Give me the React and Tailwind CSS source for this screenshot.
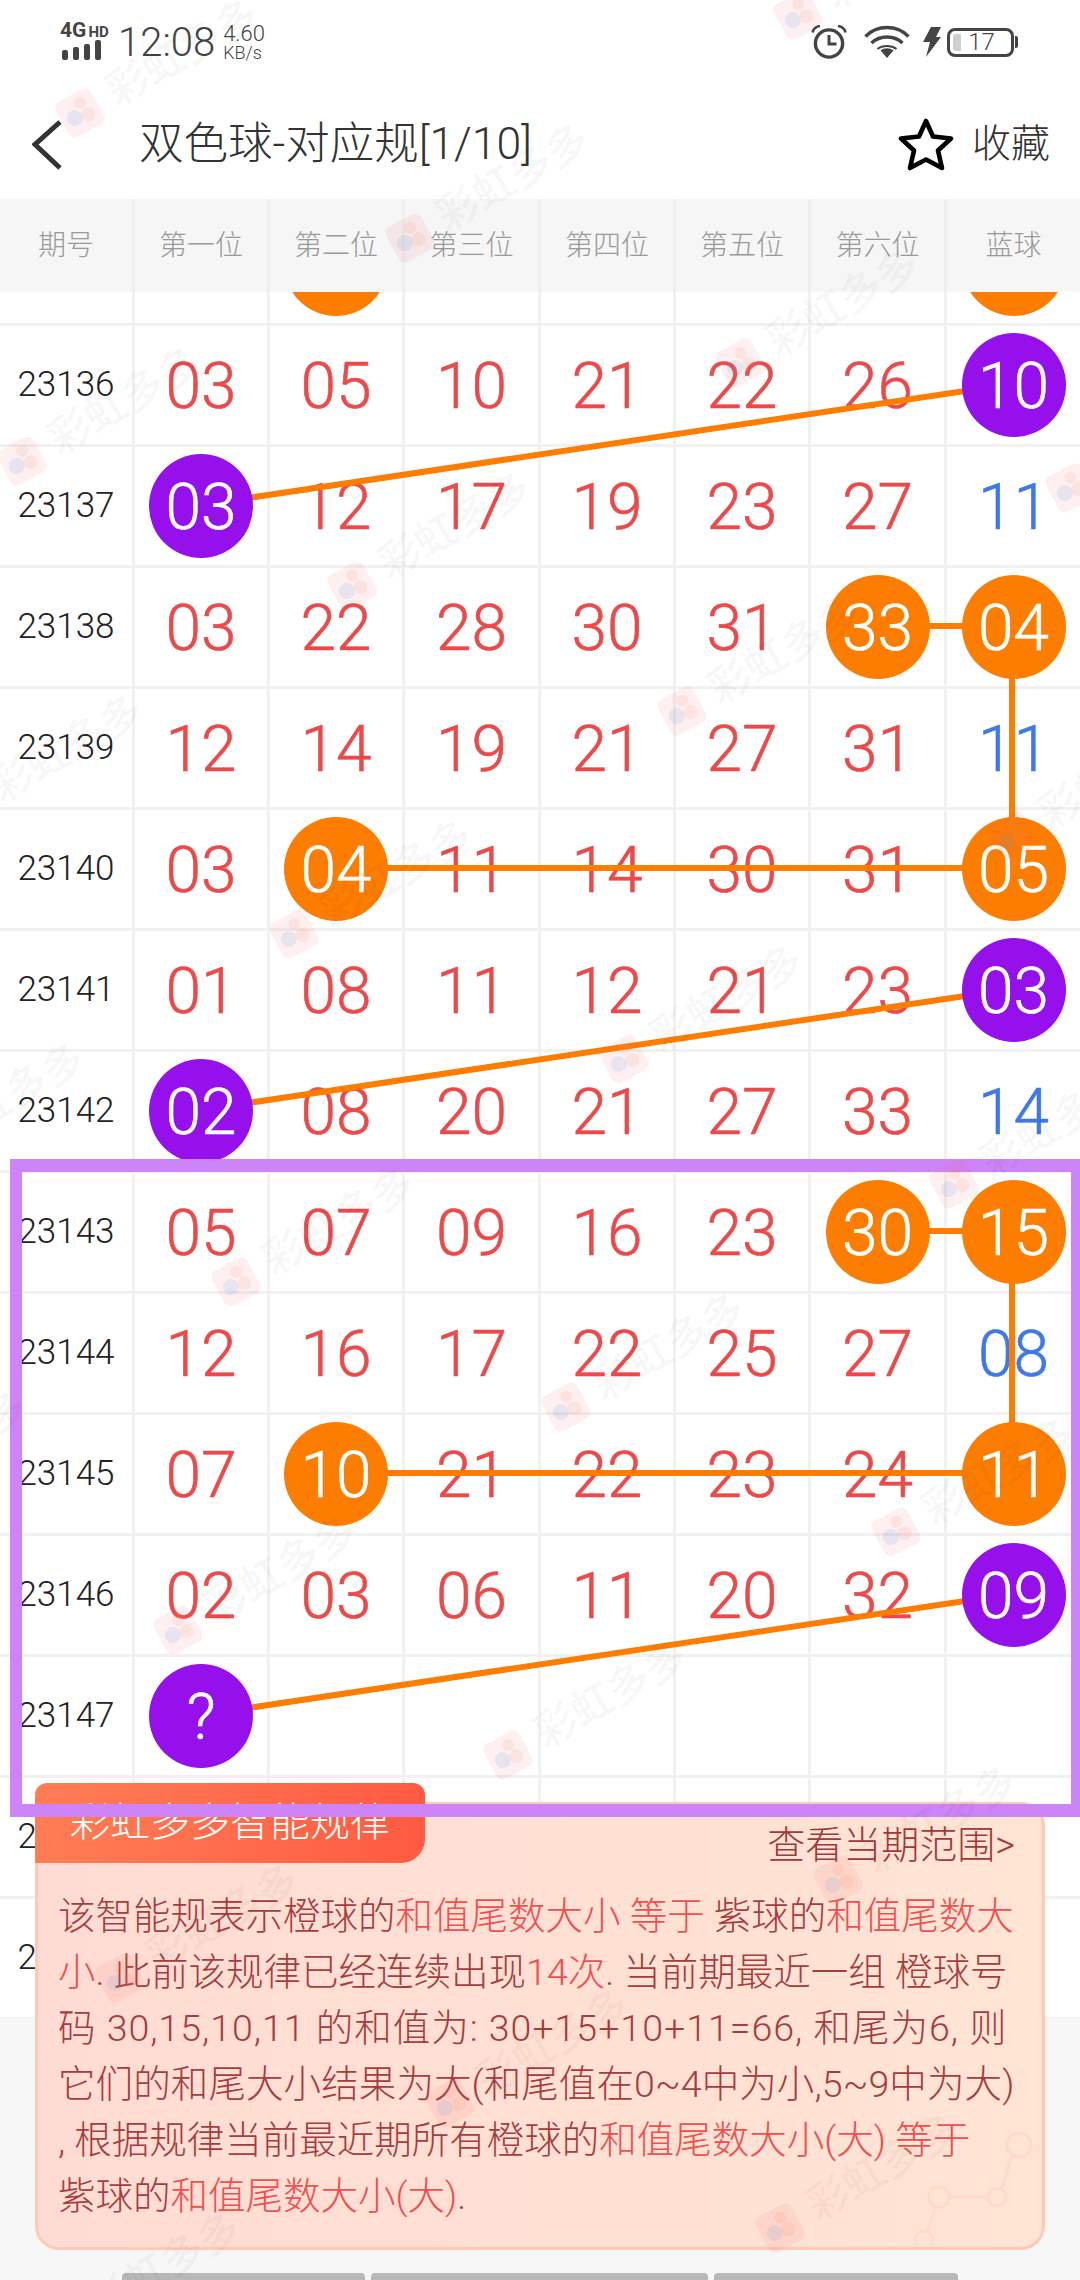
import React from 'react';

const orange = 'bg-[#fd7d00]';
const purple = 'bg-[#9510eb]';

// o = orange ball, p = purple ball, value in first six slots is red, last is blue
const rows = [
  { id: '', nums: ['', 'o:', '', '', '', '', 'o:'] },
  { id: '23136', nums: ['03', '05', '10', '21', '22', '26', 'p:10'] },
  { id: '23137', nums: ['p:03', '12', '17', '19', '23', '27', '11'] },
  { id: '23138', nums: ['03', '22', '28', '30', '31', 'o:33', 'o:04'] },
  { id: '23139', nums: ['12', '14', '19', '21', '27', '31', '11'] },
  { id: '23140', nums: ['03', 'o:04', '11', '14', '30', '31', 'o:05'] },
  { id: '23141', nums: ['01', '08', '11', '12', '21', '23', 'p:03'] },
  { id: '23142', nums: ['p:02', '08', '20', '21', '27', '33', '14'] },
  { id: '23143', nums: ['05', '07', '09', '16', '23', 'o:30', 'o:15'] },
  { id: '23144', nums: ['12', '16', '17', '22', '25', '27', '08'] },
  { id: '23145', nums: ['07', 'o:10', '21', '22', '23', '24', 'o:11'] },
  { id: '23146', nums: ['02', '03', '06', '11', '20', '32', 'p:09'] },
  { id: '23147', nums: ['p:?', '', '', '', '', '', ''] },
  { id: '23148', nums: ['', '', '', '', '', '', ''] },
  { id: '23149', nums: ['', '', '', '', '', '', ''] },
];

const headers = ['期号', '第一位', '第二位', '第三位', '第四位', '第五位', '第六位', '蓝球'];
const gridCols = 'grid grid-cols-[135px_135px_135px_136px_135px_135px_136px_133px]';

const links = [
  [1012, 384, 201, 505],
  [876, 626, 1012, 626],
  [1012, 626, 1012, 868],
  [336, 868, 1012, 868],
  [1012, 989, 201, 1110],
  [876, 1231, 1012, 1231],
  [1012, 1231, 1012, 1473],
  [336, 1473, 1012, 1473],
  [1012, 1594, 201, 1715],
];

const marks = [];
for (let j = -2; j < 8; j++) {
  for (let i = -2; i < 5; i++) {
    const x = 80 + 330 * i - 58 * j;
    const y = 113 + 125 * i + 348 * j;
    if (x > -220 && x < 1120 && y > -60 && y < 2420) marks.push({ x, y });
  }
}

const Cell = ({ value, blue, last }) => {
  const ball = value.startsWith('o:') || value.startsWith('p:');
  const text = ball ? value.slice(2) : value;
  return (
    <div className={`flex items-center justify-center ${last ? '' : 'border-r-[3px] border-[#f1f1f1]'}`}>
      {ball ? (
        <div className={`relative z-[2] flex h-[104px] w-[104px] shrink-0 items-center justify-center rounded-full pt-[3px] text-[64px] font-light text-white [-webkit-text-stroke:0.6px] ${value[0] === 'o' ? orange : purple}`}>
          {text}
        </div>
      ) : (
        <span className={`pt-[3px] text-[64px] font-light [-webkit-text-stroke:0.6px] ${blue ? 'text-[#3f78e8]' : 'text-[#ec4a4a]'}`}>{text}</span>
      )}
    </div>
  );
};

const Red = ({ children }) => <span className="text-[#f04f4f]">{children}</span>;

const Alarm = () => (
  <svg width="36" height="34" viewBox="0 0 36 34" fill="none" stroke="#444" strokeWidth="3.4">
    <circle cx="18" cy="18.5" r="13.6" />
    <path d="M18 10v9h7.5" strokeWidth="3" />
    <path d="M1.5 7.5C2.5 3.5 5 1.5 9 1M34.5 7.5C33.5 3.5 31 1.5 27 1" strokeWidth="2.6" />
  </svg>
);

const Wifi = () => (
  <svg width="46" height="34" viewBox="0 0 46 34" fill="none" stroke="#444" strokeWidth="3.4">
    <path d="M1.5 11.5C13 -0.5 33 -0.5 44.5 11.5" />
    <path d="M7.5 18C16 10 30 10 38.5 18" />
    <path d="M13.5 24C18.5 20 27.5 20 32.5 24" strokeWidth="2" />
    <path d="M16.5 25.5C20.5 22.5 25.5 22.5 29.5 25.5L23 33Z" fill="#444" stroke="none" />
  </svg>
);

const Bolt = () => (
  <svg width="18" height="30" viewBox="0 0 18 30">
    <path d="M8 0H18L13 10H18L3 30L7 15H0Z" fill="#444" />
  </svg>
);

const Battery = () => (
  <div className="flex items-center">
    <div className="relative flex h-[29px] w-[67px] items-center justify-center rounded-[8px] border-[3px] border-[#444] text-[24px] font-light leading-none text-[#444]">
      <div className="absolute bottom-[3px] left-[3px] top-[3px] w-[8px] rounded-l-[3px] bg-[#cfcfcf]" />
      <span className="pl-[2px]">17</span>
    </div>
    <div className="ml-[1px] h-[12px] w-[3px] rounded-r-[2px] bg-[#444]" />
  </div>
);

const Watermark = ({ x, y }) => (
  <div className="absolute" style={{ left: x, top: y }}>
    <svg className="absolute left-[-25px] top-[-27px]" width="50" height="54" viewBox="0 0 50 54">
      <g transform="rotate(-28 25 27)">
        <rect x="5" y="7" width="40" height="40" rx="7" fill="#f25555" opacity="0.09" />
        <circle cx="18" cy="29" r="8" fill="#5b9be8" opacity="0.14" />
        <circle cx="30" cy="18" r="6" fill="#f08a6a" opacity="0.13" />
        <circle cx="32" cy="32" r="7" fill="#f08a6a" opacity="0.13" />
      </g>
    </svg>
    <span className="absolute left-[30px] top-[-48px] origin-[0_50%] -rotate-30 whitespace-nowrap text-[42px] font-medium leading-[60px] text-black/[0.05]">
      彩虹多多
    </span>
  </div>
);

const App = () => {
  return (
    <div className="relative h-[2280px] w-[1080px] overflow-hidden bg-[#f7f7f7] font-[Roboto,'Noto_Sans_CJK_SC',sans-serif] text-[#333]">
      {/* status bar */}
      <div className="flex h-[90px] items-start justify-between bg-white pl-[60px] pr-[60px] pt-[22px]">
        <div className="flex items-start">
          <div className="w-[48px]">
            <div className="flex items-baseline text-[#444]">
              <span className="text-[21px] font-bold leading-[16px]">4G</span>
              <span className="ml-[2px] text-[15px] font-bold leading-[16px]">HD</span>
            </div>
            <div className="flex h-[20px] items-end gap-[5px] pl-[2px]">
              <div className="h-[10px] w-[6px] rounded-[2px] bg-[#444]" />
              <div className="h-[13px] w-[6px] rounded-[2px] bg-[#444]" />
              <div className="h-[16px] w-[6px] rounded-[2px] bg-[#444]" />
              <div className="h-[20px] w-[6px] rounded-[2px] bg-[#444]" />
            </div>
          </div>
          <div className="ml-[10px] mt-[3px] text-[40px] font-light leading-[36px] text-[#444]">12:08</div>
          <div className="ml-[8px] mt-[2px] text-[#444]">
            <div className="text-[22px] font-light leading-[20px]">4.60</div>
            <div className="text-[18px] font-light leading-[18px]">KB/s</div>
          </div>
        </div>
        <div className="mr-[2px] flex items-center pt-[3px]">
          <Alarm />
          <div className="ml-[17px]"><Wifi /></div>
          <div className="ml-[13px]"><Bolt /></div>
          <div className="ml-[6px]"><Battery /></div>
        </div>
      </div>

      {/* nav bar */}
      <div className="flex h-[109px] items-center bg-white pl-[32px] pr-[30px]">
        <svg width="30" height="50" viewBox="0 0 30 50" fill="none" stroke="#333" strokeWidth="5">
          <path d="M28 2L3 24.5L28 48" />
        </svg>
        <div className="ml-[77px] text-[44.5px] font-light text-[#333]">双色球-对应规[1/10]</div>
        <div className="ml-auto flex items-center">
          <svg width="56" height="54" viewBox="0 0 56 54" fill="none" stroke="#000" strokeWidth="4.6" strokeLinejoin="round">
            <path d="M28 3L35 18.5L53 20.5L40 32.5L44 50L28 41.5L12 50L16 32.5L3 20.5L21 18.5Z" />
          </svg>
          <span className="ml-[18px] text-[39px] font-light text-[#333]">收藏</span>
        </div>
      </div>

      {/* table header */}
      <div className={`${gridCols} relative z-[3] h-[93px] bg-[#f6f6f6]`}>
        {headers.map((h, i) => (
          <div key={h} className={`flex items-center justify-center text-[28px] font-light text-[#999] ${i < 7 ? 'border-r-[3px] border-[#efefef]' : ''}`}>
            {h}
          </div>
        ))}
      </div>

      {/* table body */}
      <div className="h-[1726px] overflow-hidden">
        <div className="-mt-[87px] bg-white">
          {rows.map((row, r) => (
            <div key={r} className={`${gridCols} h-[121px] border-b-[3px] border-[#f1f1f1]`}>
              <div className="flex items-center justify-center border-r-[3px] border-[#f1f1f1] text-[35px] font-light text-[#222]">
                {row.id}
              </div>
              {row.nums.map((n, i) => (
                <Cell key={i} value={n} blue={i === 6} last={i === 6} />
              ))}
            </div>
          ))}
        </div>
      </div>

      {/* joining lines between balls */}
      <svg className="absolute left-0 top-0 z-[1]" width="1080" height="2020" fill="none" stroke="#fd7d00" strokeWidth="6">
        {links.map((l, i) => (
          <line key={i} x1={l[0]} y1={l[1]} x2={l[2]} y2={l[3]} />
        ))}
      </svg>

      {/* rule card */}
      <div className="absolute left-[35px] top-[1802px] z-[4] h-[448px] w-[1010px] rounded-[24px] border-[3px] border-[#ffc9b6] bg-gradient-to-r from-[#ffdcd3] to-[#ffe4d4] text-[#a63d3d]">
        <div className="absolute left-[-3px] top-[-22px] flex h-[80px] w-[390px] items-center justify-center rounded-bl-none rounded-br-[24px] rounded-t-[12px] bg-gradient-to-r from-[#ff7d55] to-[#ff5a42] text-[40px] font-light text-white">
          彩虹多多智能规律
        </div>
        <svg className="absolute right-0 top-[310px]" width="130" height="130" viewBox="0 0 130 130" fill="none" stroke="#ffdac7" strokeWidth="3">
          <circle cx="107" cy="30" r="12" />
          <circle cx="27" cy="82" r="10" />
          <circle cx="85" cy="82" r="9" />
          <circle cx="12" cy="125" r="9" />
          <path d="M100 40L90 74M36 82H76M24 92L15 116" />
        </svg>
        <div className="relative mt-[15px] flex h-[50px] justify-end pr-[27px] text-[38px] font-light leading-[50px] text-[#a03a3a]">
          查看当期范围&gt;
        </div>
        <div className="relative mt-[18px] whitespace-nowrap pl-[20px] text-[37.5px] font-light leading-[56px]">
          <div>该智能规表示橙球的<Red>和值尾数大小 等于</Red> 紫球的<Red>和值尾数大</Red></div>
          <div><Red>小</Red>. 此前该规律已经连续出现<Red>14次</Red>. 当前期最近一组 橙球号</div>
          <div className="tracking-[1px]">码 30,15,10,11 的和值为: 30+15+10+11=66, 和尾为6, 则</div>
          <div className="tracking-[0.1px]">它们的和尾大小结果为大(和尾值在0~4中为小,5~9中为大)</div>
          <div>, 根据规律当前最近期所有橙球的<Red>和值尾数大小(大) 等于</Red></div>
          <div>紫球的<Red>和值尾数大小(大)</Red>.</div>
        </div>
      </div>

      {/* bottom buttons peeking out */}
      <div className="absolute bottom-0 left-[122px] flex h-[7px] gap-[6px]">
        <div className="w-[243px] rounded-t-[4px] bg-[#b8b8b8]" />
        <div className="w-[337px] rounded-t-[4px] bg-[#b8b8b8]" />
        <div className="w-[244px] rounded-t-[4px] bg-[#b8b8b8]" />
      </div>

      {/* highlight frame */}
      <div className="pointer-events-none absolute left-[10px] top-[1159px] z-[5] h-[658px] w-[1070px] border-y-[13px] border-l-[12px] border-r-[9px] border-[#cc84f8]" />

      {/* watermark */}
      <div className="pointer-events-none absolute inset-0 z-[6]">
        {marks.map((m) => (
          <Watermark key={`${m.x}-${m.y}`} x={m.x} y={m.y} />
        ))}
      </div>
    </div>
  );
};

export default App;
